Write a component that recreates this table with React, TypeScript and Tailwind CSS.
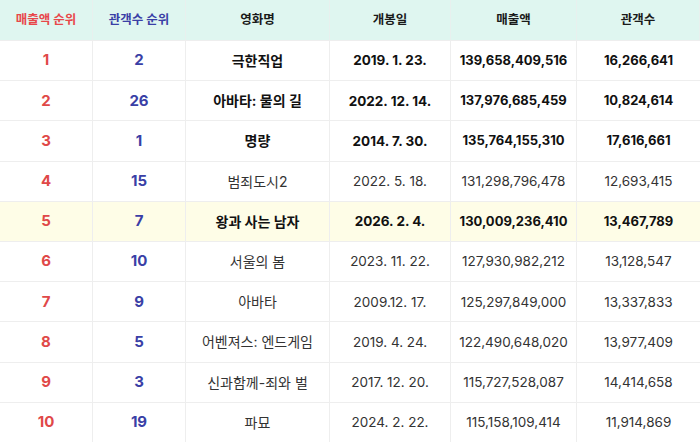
import React from "react";

type Row = { r: string; a: string; t: string; d: string; rev: string; aud: string; bold: boolean; hl?: boolean };

const rows: Row[] = [
  { r: "1", a: "2", t: "극한직업", d: "2019. 1. 23.", rev: "139,658,409,516", aud: "16,266,641", bold: true },
  { r: "2", a: "26", t: "아바타: 물의 길", d: "2022. 12. 14.", rev: "137,976,685,459", aud: "10,824,614", bold: true },
  { r: "3", a: "1", t: "명량", d: "2014. 7. 30.", rev: "135,764,155,310", aud: "17,616,661", bold: true },
  { r: "4", a: "15", t: "범죄도시2", d: "2022. 5. 18.", rev: "131,298,796,478", aud: "12,693,415", bold: false },
  { r: "5", a: "7", t: "왕과 사는 남자", d: "2026. 2. 4.", rev: "130,009,236,410", aud: "13,467,789", bold: true, hl: true },
  { r: "6", a: "10", t: "서울의 봄", d: "2023. 11. 22.", rev: "127,930,982,212", aud: "13,128,547", bold: false },
  { r: "7", a: "9", t: "아바타", d: "2009.12. 17.", rev: "125,297,849,000", aud: "13,337,833", bold: false },
  { r: "8", a: "5", t: "어벤져스: 엔드게임", d: "2019. 4. 24.", rev: "122,490,648,020", aud: "13,977,409", bold: false },
  { r: "9", a: "3", t: "신과함께-죄와 벌", d: "2017. 12. 20.", rev: "115,727,528,087", aud: "14,414,658", bold: false },
  { r: "10", a: "19", t: "파묘", d: "2024. 2. 22.", rev: "115,158,109,414", aud: "11,914,869", bold: false },
];

const font = { fontFamily: '"Inter", "Noto Sans CJK KR", sans-serif' };

export default function App() {
  return (
    <div className="w-[700px] h-[442px] bg-white overflow-hidden" style={font}>
      <div className="grid grid-cols-[93px_93px_144px_121px_126px_123px] grid-rows-[40px_repeat(10,1fr)] h-[442px]">
        {["매출액 순위", "관객수 순위", "영화명", "개봉일", "매출액", "관객수"].map((h, i) => (
          <div
            key={h}
            className={
              "flex items-center justify-center bg-[#dff6f0] text-[12.5px] font-semibold border-r border-[#e8f0ee] last:border-r-0 " +
              (i === 0 ? "text-[#e8474a]" : i === 1 ? "text-[#3a3fa6]" : "text-[#1a1a1a]")
            }
          >
            {h}
          </div>
        ))}
        {rows.map((row) => {
          const bg = row.hl ? "bg-[#fefde7]" : "bg-white";
          const cell = "flex items-center justify-center border-t border-r border-[#eeeeee] " + bg;
          const txt = row.bold ? "font-bold text-[#111111]" : "font-normal text-[#333333]";
          const num = row.bold ? " text-[13px] " : " text-[13.5px] ";
          return (
            <React.Fragment key={row.r}>
              <div className={cell + " text-[15px] font-bold text-[#e04848]"}>{row.r}</div>
              <div className={cell + " text-[15px] font-bold text-[#3a3fa6]"}>{row.a}</div>
              <div className={cell + " text-[14px] " + txt}>{row.t}</div>
              <div className={cell + " text-[13.5px] " + txt}>{row.d}</div>
              <div className={cell + num + txt}>{row.rev}</div>
              <div className={"flex items-center justify-center border-t border-[#eeeeee] " + bg + num + txt}>{row.aud}</div>
            </React.Fragment>
          );
        })}
      </div>
    </div>
  );
}
